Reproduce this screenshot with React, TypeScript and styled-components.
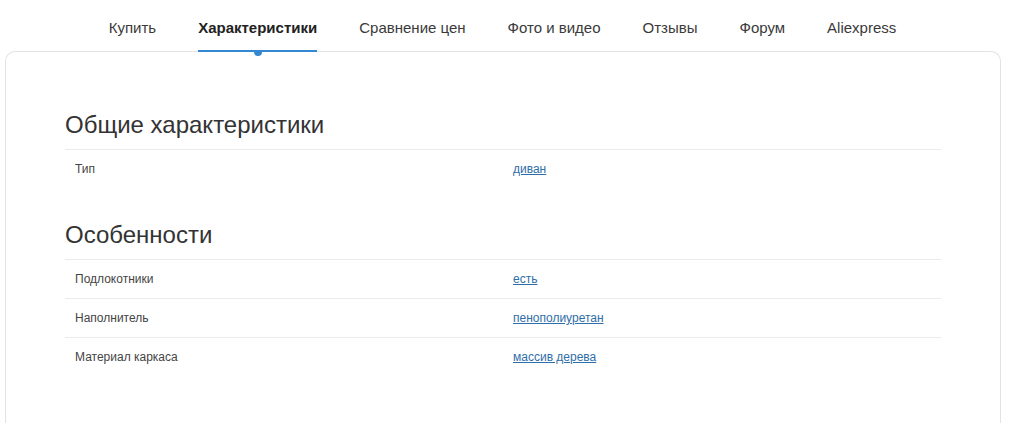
import React from "react";
import styled, { createGlobalStyle } from "styled-components";

const Global = createGlobalStyle`
  html, body { margin: 0; padding: 0; background: #fff; }
  body { font-family: "Liberation Sans", Arial, sans-serif; color: #333; }
`;

const Page = styled.div`
  width: 1024px;
`;

const Nav = styled.nav`
  display: flex;
  justify-content: center;
  margin: 0 24px 0 5px;
`;

const Tab = styled.a<{ $active?: boolean }>`
  position: relative;
  display: block;
  padding: 18px 21px 13px;
  line-height: 20px;
  font-size: 15px;
  color: ${(p) => (p.$active ? "#222" : "#3a3a3a")};
  font-weight: ${(p) => (p.$active ? 700 : 400)};
  text-decoration: none;
  white-space: nowrap;
  z-index: 1;

  ${(p) =>
    p.$active &&
    `
    &::after {
      content: "";
      position: absolute;
      left: 21px;
      right: 21px;
      bottom: -1px;
      height: 2px;
      background: #3488d2;
    }
    &::before {
      content: "";
      position: absolute;
      left: 50%;
      margin-left: -4px;
      bottom: -5px;
      width: 8px;
      height: 4px;
      border-radius: 0 0 4px 4px;
      background: #3488d2;
    }
  `}
`;

const Card = styled.section`
  margin: 0 23px 0 5px;
  border: 1px solid #e3e3e3;
  border-bottom: none;
  border-radius: 10px 10px 0 0;
  padding: 59px 59px 47px;
`;

const Section = styled.div`
  & + & {
    margin-top: 33px;
  }
`;

const Heading = styled.h2`
  margin: 0 0 10px;
  font-size: 24px;
  line-height: 28px;
  font-weight: 400;
  color: #333;
`;

const Row = styled.div`
  display: grid;
  grid-template-columns: 1fr 1fr;
  border-top: 1px solid #ebebeb;
`;

const Cell = styled.div`
  padding: 12px 10px;
  font-size: 12px;
  line-height: 14px;
  color: #444;
`;

const Value = styled.a`
  color: #2f6ea8;
  text-decoration: underline;
  cursor: pointer;
`;

const tabs = [
  "Купить",
  "Характеристики",
  "Сравнение цен",
  "Фото и видео",
  "Отзывы",
  "Форум",
  "Aliexpress",
];

const sections: { title: string; rows: [string, string][] }[] = [
  { title: "Общие характеристики", rows: [["Тип", "диван"]] },
  {
    title: "Особенности",
    rows: [
      ["Подлокотники", "есть"],
      ["Наполнитель", "пенополиуретан"],
      ["Материал каркаса", "массив дерева"],
    ],
  },
];

export default function App() {
  return (
    <Page>
      <Global />
      <Nav>
        {tabs.map((t) => (
          <Tab key={t} $active={t === "Характеристики"}>
            {t}
          </Tab>
        ))}
      </Nav>
      <Card>
        {sections.map((s) => (
          <Section key={s.title}>
            <Heading>{s.title}</Heading>
            {s.rows.map(([k, v]) => (
              <Row key={k}>
                <Cell>{k}</Cell>
                <Cell>
                  <Value>{v}</Value>
                </Cell>
              </Row>
            ))}
          </Section>
        ))}
      </Card>
    </Page>
  );
}
